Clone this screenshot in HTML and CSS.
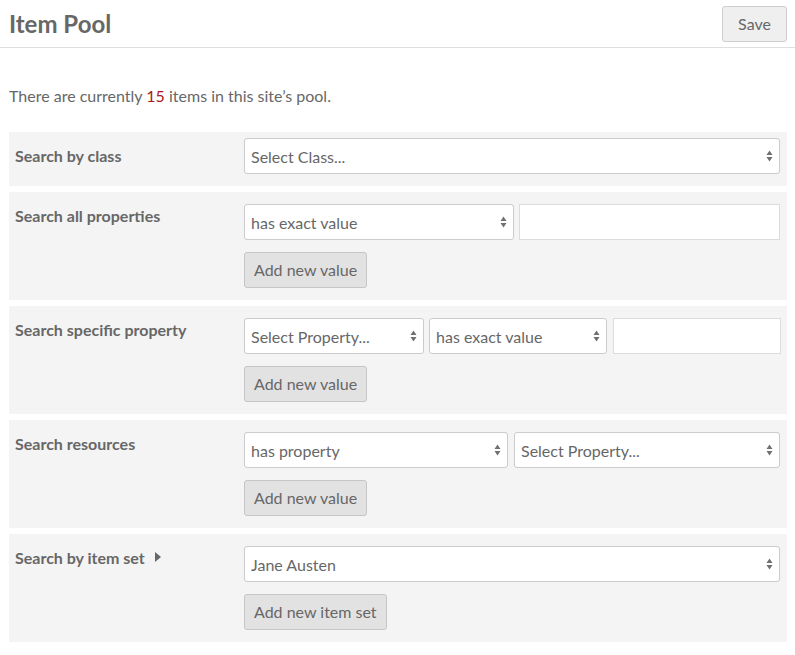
FILE: index.html
```html
<!DOCTYPE html>
<html lang="en">
<head>
<meta charset="utf-8">
<title>Item Pool</title>
<link rel="stylesheet" href="styles.css">
</head>
<body>
<header class="page-header">
  <h1 class="page-title">Item Pool</h1>
  <button class="btn btn-save" type="button">Save</button>
</header>
<main class="content">
  <p class="pool-count">There are currently <span class="count">15</span> items in this site’s pool.</p>
  <div class="panels">
    <section class="panel panel-compact">
      <div class="panel-label">Search by class</div>
      <div class="panel-fields">
        <div class="field-row row-single">
          <select class="select"><option>Select Class...</option></select>
        </div>
      </div>
    </section>

    <section class="panel">
      <div class="panel-label">Search all properties</div>
      <div class="panel-fields">
        <div class="field-row row-value">
          <select class="select"><option>has exact value</option></select>
          <input class="text-input" type="text">
        </div>
        <button class="btn btn-add" type="button">Add new value</button>
      </div>
    </section>

    <section class="panel">
      <div class="panel-label">Search specific property</div>
      <div class="panel-fields">
        <div class="field-row row-property">
          <select class="select"><option>Select Property...</option></select>
          <select class="select"><option>has exact value</option></select>
          <input class="text-input" type="text">
        </div>
        <button class="btn btn-add" type="button">Add new value</button>
      </div>
    </section>

    <section class="panel">
      <div class="panel-label">Search resources</div>
      <div class="panel-fields">
        <div class="field-row row-resource">
          <select class="select"><option>has property</option></select>
          <select class="select"><option>Select Property...</option></select>
        </div>
        <button class="btn btn-add" type="button">Add new value</button>
      </div>
    </section>

    <section class="panel">
      <div class="panel-label">Search by item set
        <svg class="caret" width="6" height="10" viewBox="0 0 6 10" aria-hidden="true"><path d="M0 0L6 5L0 10Z" fill="#676767"/></svg>
      </div>
      <div class="panel-fields">
        <div class="field-row row-single">
          <select class="select"><option>Jane Austen</option></select>
        </div>
        <button class="btn btn-add" type="button">Add new item set</button>
      </div>
    </section>
  </div>
</main>
</body>
</html>
```

FILE: styles.css
```css
* {
  box-sizing: border-box;
}

body {
  margin: 0;
  font-family: Lato, "Open Sans", sans-serif;
  color: #676767;
  background: #fff;
}

.page-header {
  height: 48px;
  border-bottom: 1px solid #dedede;
  display: flex;
  align-items: center;
  justify-content: space-between;
  padding: 0 8px 0 9px;
}

.page-title {
  margin: 0;
  font-size: 24px;
  font-weight: 700;
  line-height: 30px;
  color: #676767;
}

.btn {
  font-family: Lato, "Open Sans", sans-serif;
  font-size: 16px;
  color: #676767;
  height: 36px;
  border-radius: 3px;
  cursor: pointer;
}

.btn-save {
  width: 65px;
  padding: 0 0 1px;
  background: #efefef;
  border: 1px solid #cdcdcd;
}

.content {
  padding: 0 8px 0 9px;
}

.pool-count {
  margin: 37px 0 25px;
  font-size: 16px;
  line-height: 22px;
}

.count {
  color: #a91919;
}

.panels {
  display: flex;
  flex-direction: column;
  gap: 6px;
}

.panel {
  background: #f4f4f4;
  display: grid;
  grid-template-columns: 229px 536px;
  align-items: start;
  padding: 12px 7px 12px 6px;
}

.panel-compact {
  padding-top: 6px;
  align-items: center;
}

.panel-label {
  font-size: 16px;
  font-weight: 700;
  line-height: 20px;
  margin-top: 2px;
  display: flex;
  align-items: center;
}

.panel-compact .panel-label {
  margin-top: 0;
}

.caret {
  margin-left: 10px;
  margin-top: -2px;
}

.panel-fields {
  display: flex;
  flex-direction: column;
  align-items: flex-start;
  gap: 12px;
}

.field-row {
  display: grid;
  gap: 5px;
  width: 536px;
}

.row-single {
  grid-template-columns: 1fr;
}

.row-value {
  grid-template-columns: 270px 1fr;
}

.row-property {
  grid-template-columns: 180px 178px 1fr;
}

.row-property .text-input {
  margin-left: 1px;
}

.row-resource {
  grid-template-columns: 264px 1fr;
  column-gap: 6px;
}

.select {
  -webkit-appearance: none;
  appearance: none;
  height: 36px;
  width: 100%;
  font-family: Lato, "Open Sans", sans-serif;
  font-size: 16px;
  color: #676767;
  background-color: #fff;
  background-image: url("data:image/svg+xml;utf8,<svg xmlns='http://www.w3.org/2000/svg' width='7' height='12' viewBox='0 0 7 12'><path d='M0.5 5L3.5 0.5L6.5 5Z M0.5 7L3.5 11.5L6.5 7Z' fill='%23707070'/></svg>");
  background-repeat: no-repeat;
  background-position: right 6px center;
  border: 1px solid #cbcbcb;
  border-radius: 3px;
  padding: 0 20px 0 6px;
  margin: 0;
}

.text-input {
  height: 36px;
  width: 100%;
  border: 1px solid #dcdcdc;
  border-radius: 0;
  background: #fff;
  margin: 0;
  padding: 0 6px;
  font-family: Lato, "Open Sans", sans-serif;
  font-size: 16px;
}

.btn-add {
  background: #e2e2e2;
  border: 1px solid #c6c6c6;
  padding: 0 9px 1px;
}
```
